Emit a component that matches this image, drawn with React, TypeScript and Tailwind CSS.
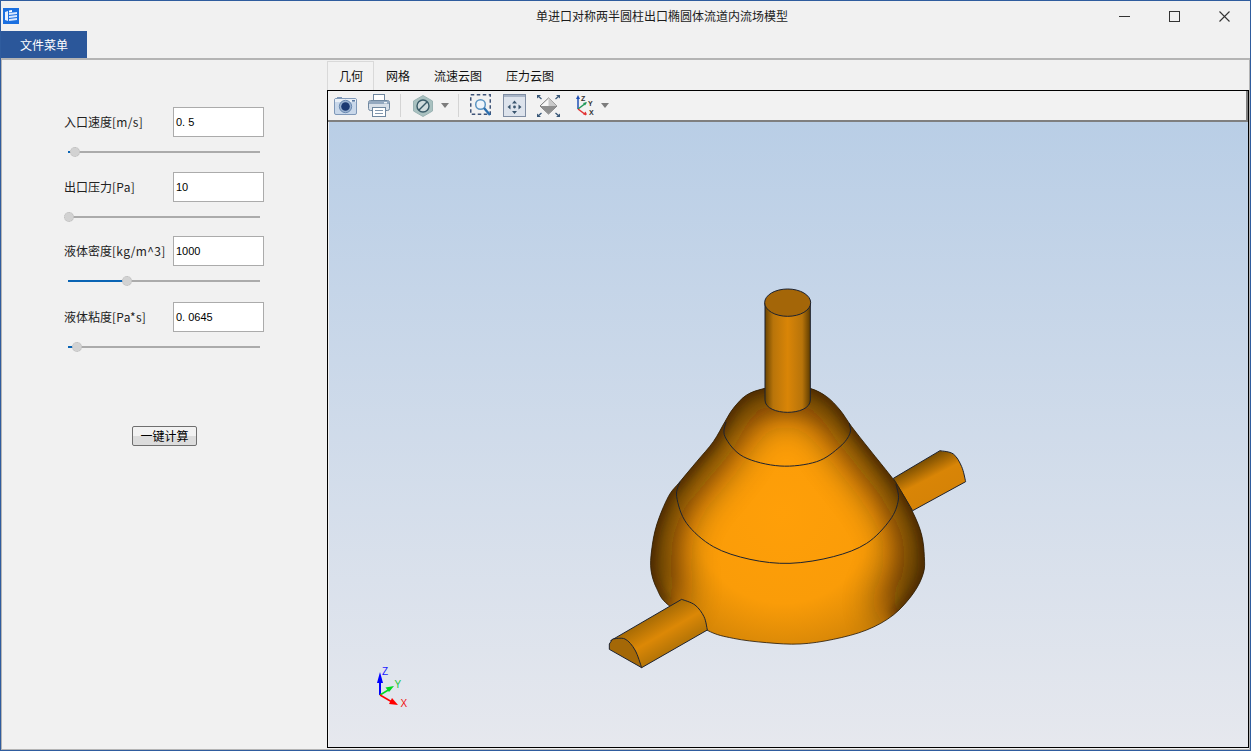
import React from "react";

type Pt = [number, number];

function smooth(pts: Pt[], closed = false): string {
  const n = pts.length;
  const at = (i: number) => (closed ? pts[(i + n) % n] : pts[Math.max(0, Math.min(n - 1, i))]);
  let d = `M${pts[0][0]} ${pts[0][1]}`;
  const last = closed ? n : n - 1;
  for (let i = 0; i < last; i++) {
    const p0 = at(i - 1), p1 = at(i), p2 = at(i + 1), p3 = at(i + 2);
    const c1x = p1[0] + (p2[0] - p0[0]) / 6, c1y = p1[1] + (p2[1] - p0[1]) / 6;
    const c2x = p2[0] - (p3[0] - p1[0]) / 6, c2y = p2[1] - (p3[1] - p1[1]) / 6;
    d += ` C${c1x} ${c1y} ${c2x} ${c2y} ${p2[0]} ${p2[1]}`;
  }
  return closed ? d + " Z" : d;
}

const topSide: Pt[] = [
  [205, 975], [170, 925], [153, 870], [155, 810], [170, 735], [205, 650], [240, 605], [290, 545], [340, 485],
  [375, 425], [400, 385], [440, 345], [495, 325], [563, 316], [630, 325], [680, 350], [720, 390], [755, 440], [810, 510],
  [870, 585], [895, 620], [940, 700], [965, 765], [973, 830], [970, 880], [940, 940], [880, 1005],
];
const bottomSide: Pt[] = [[800, 1050], [700, 1078], [600, 1092], [500, 1088], [400, 1075], [320, 1050]];
const bodyPath = smooth([...topSide, ...bottomSide], true);
const sidePath = smooth(topSide);
const ring1 = smooth([[378, 425], [375, 470], [430, 530], [540, 558], [650, 545], [720, 500], [750, 460], [748, 430]]);
const ring2 = smooth([[240, 605], [230, 650], [260, 730], [340, 800], [450, 838], [570, 850], [700, 830], [800, 790], [870, 720], [895, 660], [888, 612]]);

function Scene() {
  const line = "#1c2230";
  return (
    <svg className="block w-full h-full" viewBox="329 122 919 625" preserveAspectRatio="none">
      <defs>
        <linearGradient id="bg" x1="0" y1="0" x2="0" y2="1">
          <stop offset="0" stopColor="#b9cee6" />
          <stop offset="1" stopColor="#e6e8ee" />
        </linearGradient>
        <radialGradient id="bodyFill" gradientUnits="userSpaceOnUse" cx="550" cy="700" r="540">
          <stop offset="0" stopColor="#ff9f08" />
          <stop offset="0.5" stopColor="#fa9c08" />
          <stop offset="1" stopColor="#b87406" />
        </radialGradient>
        <linearGradient id="cyl" x1="495" y1="0" x2="631" y2="0" gradientUnits="userSpaceOnUse">
          <stop offset="0" stopColor="#6a4400" />
          <stop offset="0.18" stopColor="#b8740a" />
          <stop offset="0.5" stopColor="#d98507" />
          <stop offset="0.82" stopColor="#b8740a" />
          <stop offset="1" stopColor="#5e3c00" />
        </linearGradient>
        <linearGradient id="pipeR" x1="950" y1="553" x2="1000" y2="650" gradientUnits="userSpaceOnUse">
          <stop offset="0" stopColor="#7d5002" />
          <stop offset="0.5" stopColor="#d98506" />
          <stop offset="1" stopColor="#d68306" />
        </linearGradient>
        <linearGradient id="pipeL" x1="150" y1="1010" x2="208" y2="1109" gradientUnits="userSpaceOnUse">
          <stop offset="0" stopColor="#a56a05" />
          <stop offset="0.55" stopColor="#dc8806" />
          <stop offset="1" stopColor="#b87606" />
        </linearGradient>
        <clipPath id="bodyClip"><path d={bodyPath} /></clipPath>
        <filter id="blurWide" filterUnits="userSpaceOnUse" x="-200" y="0" width="1600" height="1400">
          <feGaussianBlur stdDeviation="62" />
        </filter>
        <filter id="blurNarrow" filterUnits="userSpaceOnUse" x="-200" y="0" width="1600" height="1400">
          <feGaussianBlur stdDeviation="14" />
        </filter>
      </defs>
      <rect x="329" y="122" width="919" height="625" fill="url(#bg)" />
      <g transform="translate(600 280) scale(0.33333)" strokeLinejoin="round">
        {/* right pipe */}
        <path
          d={"M880 595 L1020 512 " + smooth([[1020, 512], [1060, 522], [1085, 560], [1097, 605]]).replace(/^M\S+ \S+/, "") + " L938 692 Z"}
          fill="url(#pipeR)"
          stroke={line}
          strokeWidth="3"
        />
        {/* body */}
        <path d={bodyPath} fill="url(#bodyFill)" />
        <g clipPath="url(#bodyClip)">
          <path d={sidePath} fill="none" stroke="#1a0f00" strokeWidth="120" opacity="0.85" filter="url(#blurWide)" />
          <path d={sidePath} fill="none" stroke="#1a0f00" strokeWidth="14" opacity="0.75" filter="url(#blurNarrow)" />
        </g>
        <path d={bodyPath} fill="none" stroke="#2a1c08" strokeWidth="2.5" />
        <path d={ring1} fill="none" stroke={line} strokeWidth="3" />
        <path d={ring2} fill="none" stroke={line} strokeWidth="3" />
        {/* left pipe */}
        <path
          d={"M32 1082 L245 958 " + smooth([[245, 958], [285, 975], [312, 1010], [322, 1050]]).replace(/^M\S+ \S+/, "") + " L125 1163 Z"}
          fill="url(#pipeL)"
          stroke={line}
          strokeWidth="3"
        />
        <path
          d={smooth([[38, 1077], [75, 1077], [105, 1110], [125, 1163]]) + " L28 1108 L28 1092 Z"}
          fill="#a46807"
          stroke={line}
          strokeWidth="3"
        />
        {/* top cylinder */}
        <path
          d="M495 68 L495 360 C495 385 530 397 563 397 C596 397 631 385 631 360 L631 68 Z"
          fill="url(#cyl)"
          stroke={line}
          strokeWidth="3"
        />
        <ellipse cx="563" cy="68" rx="69" ry="41" fill="#a46608" stroke={line} strokeWidth="3" />
      </g>
      {/* axis triad */}
      <line x1="380" y1="695" x2="380" y2="678" stroke="#0000ff" strokeWidth="2" />
      <path d="M380 672 L383 683 L377 683 Z" fill="#0000ff" />
      <line x1="380" y1="695" x2="390" y2="689" stroke="#00d820" strokeWidth="1.5" />
      <path d="M394 686 L389 692 L385.5 687.5 Z" fill="#00d820" />
      <line x1="380" y1="695" x2="392" y2="702" stroke="#ff0000" strokeWidth="1.5" />
      <path d="M398 705 L389 704 L392 698 Z" fill="#ff0000" />
      <text x="382" y="675" fontSize="10" fill="#1a1aff" fontFamily="Liberation Sans, sans-serif">Z</text>
      <text x="394.5" y="688" fontSize="10" fill="#22c83c" fontFamily="Liberation Sans, sans-serif">Y</text>
      <text x="400.5" y="707" fontSize="10" fill="#f01010" fontFamily="Liberation Sans, sans-serif">X</text>
    </svg>
  );
}

function Slider({ cx, fillTo }: { cx: number; fillTo: number }) {
  return (
    <div className="relative w-[192px] h-[10px] ml-[4px] mt-[10px] flex items-center">
      <div className="w-full h-[2px] bg-[#ababab]" />
      <div className="absolute left-0 top-[4px] h-[2px] bg-[#0a64b4]" style={{ width: fillTo }} />
      <div
        className="absolute top-0 w-[10px] h-[10px] rounded-full bg-[#d2d2d2] border border-dotted border-[#bcbcbc]"
        style={{ left: cx - 5 }}
      />
    </div>
  );
}

function Field({
  cn,
  unit,
  value,
  cx,
  fillTo,
  mb,
}: {
  cn: string;
  unit: string;
  value: React.ReactNode;
  cx: number;
  fillTo: number;
  mb: string;
}) {
  return (
    <div className={mb}>
      <div className="flex items-center h-[30px]">
        <div className="w-[109px] text-[12px] text-[#222] whitespace-nowrap">
          {cn}
          <span className="tracking-[0.3px]">{unit}</span>
        </div>
        <div className="w-[91px] h-[30px] bg-white border border-[#ababab] flex items-center pl-[2px] text-[11px] text-black [font-family:'Liberation_Sans',sans-serif]">
          {value}
        </div>
      </div>
      <Slider cx={cx} fillTo={fillTo} />
    </div>
  );
}

function AppIcon() {
  return (
    <svg width="16" height="16" viewBox="0 0 16 16" className="ml-[2px] mt-[7px] shrink-0">
      <rect width="16" height="16" fill="#1a6fe0" />
      <path d="M2 4 L5 3 L5 13 L2 12 Z" fill="#e8f0ff" />
      <path d="M6 5 L14 4 L14 6 L6 7 Z M6 8 L14 7 L14 9 L6 10 Z M6 11 L14 10 L14 12 L6 13 Z" fill="#dbe8ff" />
      <path d="M6 2.5 L9 2 L9 4 L6 4.5 Z" fill="#ffffff" />
    </svg>
  );
}

function Sep({ ml }: { ml: string }) {
  return <div className={`w-px h-[23px] bg-[#d4d4d4] ${ml}`} />;
}

function Arrow({ ml }: { ml: string }) {
  return (
    <svg width="8" height="5" viewBox="0 0 8 5" className={ml}>
      <path d="M0 0 H8 L4 5 Z" fill="#7c7c7c" />
    </svg>
  );
}

function Toolbar() {
  return (
    <div className="h-[31px] shrink-0 flex items-center bg-[#f2f2f2] border-r-2 border-b-2 border-[#7f7f7f]">
      {/* camera */}
      <svg width="23" height="19" viewBox="0 0 23 19" className="ml-[6px]">
        <rect x="0.5" y="2.5" width="22" height="16" rx="1.5" fill="#c9d8ea" stroke="#7f98b8" />
        <rect x="3" y="1" width="5" height="2" fill="#7f98b8" />
        <rect x="1" y="3" width="21" height="3" fill="#eaf0f7" />
        <circle cx="11.5" cy="10.5" r="6.2" fill="#9ab2d0" stroke="#6a89b0" />
        <circle cx="11.5" cy="10.5" r="4.3" fill="#1c3a72" />
        <rect x="18" y="4" width="3" height="1.6" fill="#5b7ba3" />
      </svg>
      {/* printer */}
      <svg width="22" height="23" viewBox="0 0 22 23" className="ml-[11px]">
        <rect x="5.5" y="0.5" width="11" height="7" fill="#fff" stroke="#6f879f" />
        <rect x="0.5" y="6.5" width="21" height="10" rx="2" fill="#d7dfe8" stroke="#6f879f" />
        <rect x="1" y="7" width="20" height="3" fill="#93a8bf" />
        <rect x="16" y="8" width="3" height="1.4" fill="#eef2f6" />
        <rect x="4.5" y="13.5" width="13" height="9" fill="#fff" stroke="#6f879f" />
        <path d="M7 16.5 H15 M7 19.5 H15" stroke="#8298ae" />
      </svg>
      <Sep ml="ml-[10px]" />
      {/* hex */}
      <svg width="20" height="22" viewBox="0 0 20 22" className="ml-[12px]">
        <path d="M10 0.5 L19.5 6 V16 L10 21.5 L0.5 16 V6 Z" fill="#a9c1c0" stroke="#9ab3b3" />
        <circle cx="10" cy="11" r="6" fill="#d0dcdd" stroke="#3a5b68" strokeWidth="1.4" />
        <path d="M6 15 L14 7" stroke="#3a5b68" strokeWidth="1.4" />
      </svg>
      <Arrow ml="ml-[8px]" />
      <Sep ml="ml-[9px]" />
      {/* zoom box */}
      <svg width="21" height="23" viewBox="0 0 21 23" className="ml-[11px]">
        <rect x="0.75" y="0.75" width="19.5" height="19.5" fill="none" stroke="#3f5478" strokeWidth="1.5" strokeDasharray="3.5 2.5" />
        <circle cx="10.5" cy="10.5" r="4.8" fill="#eef5fb" stroke="#5a94c2" strokeWidth="1.5" />
        <path d="M14 14 L20 21" stroke="#2a6fb0" strokeWidth="2.4" />
      </svg>
      {/* pan, pressed */}
      <svg width="23" height="23" viewBox="0 0 23 23" className="ml-[12px]">
        <rect x="0.5" y="0.5" width="22" height="22" fill="#dde3ec" stroke="#7f8da3" />
        <rect x="1" y="1" width="21" height="2" fill="#a7b4c6" />
        <path d="M11.5 6.5 L14 9.5 H9 Z M11.5 20 L14 17 H9 Z M4.5 13 L7.5 10.5 V15.5 Z M18.5 13 L15.5 10.5 V15.5 Z" fill="#3a556e" />
        <circle cx="11.5" cy="13" r="1.4" fill="#3a556e" />
      </svg>
      {/* fit */}
      <svg width="23" height="22" viewBox="0 0 23 22" className="ml-[11px]">
        <path d="M11.5 3 L20 11 L11.5 19 L3 11 Z" fill="#f7f7f7" stroke="#777" />
        <path d="M3 11 H20 L11.5 19 Z" fill="#8f8f8f" />
        <path d="M11.5 3 L20 11 L11.5 11 Z" fill="#c9c9c9" />
        <path d="M1 1 L4.5 4 M22 1 L18.5 4 M1 21 L4.5 18 M22 21 L18.5 18" stroke="#3a5878" strokeWidth="1.3" />
        <path d="M0 0 H4 L0 3.5 Z M23 0 H19 L23 3.5 Z M0 22 H4 L0 18.5 Z M23 22 H19 L23 18.5 Z" fill="#3a5878" />
      </svg>
      {/* axes */}
      <svg width="21" height="23" viewBox="0 0 21 23" className="ml-[14px]">
        <path d="M4 15 V3" stroke="#1f4fb4" strokeWidth="1.5" />
        <path d="M4 1 L6 5 H2 Z" fill="#1f4fb4" />
        <path d="M4 15 L12 9" stroke="#1f9a5a" strokeWidth="1.5" />
        <path d="M4 15 L12 21" stroke="#e23030" strokeWidth="1.5" />
        <path d="M13 20.5 L9 20.5 L11.5 17.5 Z" fill="#e23030" />
        <path d="M13 8 L11 11.5 L9 9 Z" fill="#1f9a5a" />
        <text x="7" y="7" fontSize="7" fontWeight="700" fill="#333" fontFamily="Liberation Sans, sans-serif">Z</text>
        <text x="14" y="12" fontSize="7" fontWeight="700" fill="#333" fontFamily="Liberation Sans, sans-serif">Y</text>
        <text x="15" y="21" fontSize="7" fontWeight="700" fill="#333" fontFamily="Liberation Sans, sans-serif">X</text>
      </svg>
      <Arrow ml="ml-[6px]" />
    </div>
  );
}

export default function App() {
  return (
    <div className="w-[1251px] h-[751px] flex flex-col bg-[#f1f1f1] border border-[#2f5c9e] overflow-hidden text-[#222] [font-family:'Noto_Sans_CJK_SC','Noto_Sans',sans-serif]">
      {/* title bar */}
      <div className="h-[30px] shrink-0 flex">
        <AppIcon />
        <div className="ml-[517px] text-[12px] leading-[30px] text-[#1c1c1c] whitespace-nowrap">单进口对称两半圆柱出口椭圆体流道内流场模型</div>
        <div className="ml-auto mr-px flex">
          <div className="w-[50px] h-[30px] flex items-center justify-center">
            <div className="w-[11px] h-px bg-[#333]" />
          </div>
          <div className="w-[50px] h-[30px] flex items-center justify-center">
            <div className="w-[11px] h-[11px] border border-[#333]" />
          </div>
          <div className="w-[50px] h-[30px] flex items-center justify-center">
            <svg width="11" height="11" viewBox="0 0 11 11">
              <path d="M0.5 0.5 L10.5 10.5 M10.5 0.5 L0.5 10.5" stroke="#333" strokeWidth="1.1" />
            </svg>
          </div>
        </div>
      </div>
      {/* menu */}
      <div className="h-[27px] shrink-0 flex">
        <div className="w-[86px] bg-[#2b579a] text-white text-[12px] flex items-center justify-center">文件菜单</div>
      </div>
      {/* panel */}
      <div className="flex-1 min-h-0 flex border-t-2 border-x border-b border-[#b4b4b4]">
        <div className="w-[325px] shrink-0 pl-[62px] pt-[47px]">
          <Field cn="入口速度" unit="[m/s]" value={<>0.<span className="ml-[3px]">5</span></>} cx={7} fillTo={2} mb="mb-[15px]" />
          <Field cn="出口压力" unit="[Pa]" value="10" cx={1} fillTo={0} mb="mb-[14px]" />
          <Field cn="液体密度" unit="[kg/m^3]" value="1000" cx={59} fillTo={59} mb="mb-[16px]" />
          <Field cn="液体粘度" unit="[Pa*s]" value={<>0.<span className="ml-[3px]">0645</span></>} cx={9} fillTo={9} mb="mb-[74px]" />
          <div className="ml-[68px] w-[65px] h-[20px] rounded-[2px] border border-[#6f6f6f] bg-[linear-gradient(#f2f2f2_50%,#dcdcdc_50%)] flex items-center justify-center text-[12px] text-black">
            一键计算
          </div>
        </div>
        <div className="flex-1 min-w-0 flex flex-col pt-px pb-px">
          <div className="h-[29px] shrink-0 flex text-[12px] text-[#111] whitespace-nowrap">
            <div className="pl-[11px] w-[47px] flex items-center bg-[#f2f2f2] border border-b-0 border-[#d9d9d9]">几何</div>
            <div className="px-[12px] flex items-center">网格</div>
            <div className="px-[12px] flex items-center">流速云图</div>
            <div className="px-[12px] flex items-center">压力云图</div>
          </div>
          <div className="flex-1 min-h-0 flex flex-col border border-black">
            <Toolbar />
            <div className="flex-1 min-h-0 ml-px">
              <Scene />
            </div>
          </div>
        </div>
      </div>
    </div>
  );
}
